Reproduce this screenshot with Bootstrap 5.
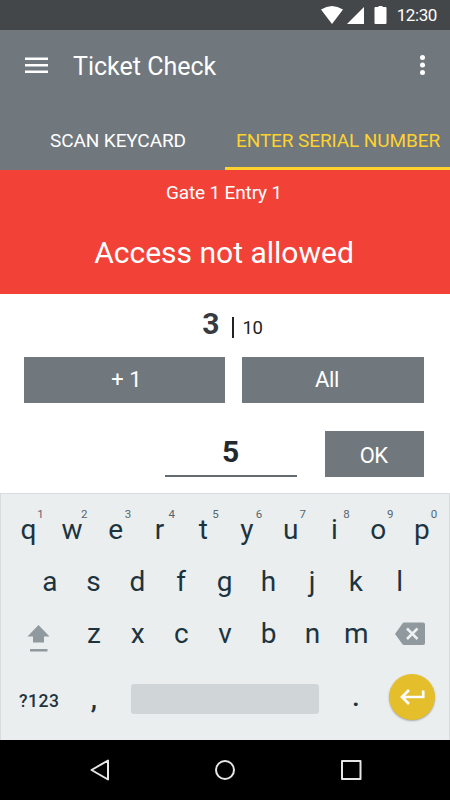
<!DOCTYPE html>
<html lang="en">
<head>
<meta charset="utf-8">
<meta name="viewport" content="width=device-width, initial-scale=1">
<title>Ticket Check</title>
<link href="https://cdn.jsdelivr.net/npm/bootstrap@5.3.0/dist/css/bootstrap.min.css" rel="stylesheet">
<style>
body{font-family:Roboto,"Liberation Sans",sans-serif;width:450px;height:800px;overflow:hidden;background:#fff}
svg{display:block;flex:none}
.status{height:30px;background:#444749;padding-right:13px;color:#fff;font-size:17px;letter-spacing:-.4px;line-height:31px}
.appbar{background:#70777d;color:#fff;height:140px}
.toolbar{height:72px;padding:0 23px 0 24px}
.title{font-size:25px;letter-spacing:0;line-height:73px;margin-left:25px}
.tabs{height:68px}
.tabs .nav-link{width:50%;color:#fff;font-size:19px;letter-spacing:-.1px;height:68px;padding:12px 0 0 50px;line-height:54px;border-bottom:3px solid transparent;border-radius:0;white-space:nowrap;text-align:left}
.tabs .nav-link.active{color:#fdd22f;border-color:#fdd22f;padding-left:11px}
.alertbox{background:#f24237;color:#fff;height:124px}
.gate{font-size:19px;letter-spacing:-.15px;line-height:46px;padding-right:2px}
.denied{font-size:30px;line-height:74px;padding-right:2px}
.count{height:63px;padding-left:15px;color:#222}
.num{font-size:30px;font-weight:700;line-height:60px;color:#373b3f}
.sep{width:2px;height:21px;background:#222;margin:3px 9px 0 12px}
.total{font-size:18.500px;letter-spacing:-.3px;line-height:68px}
.actions{padding-right:26px}
.flatbtn{background:#70777d;color:#fff;border:0;border-radius:0;height:46px;padding:0;font-size:22px;line-height:46px}
.b1{width:201px;padding-left:4px}.b2{width:182px;padding-right:12px;letter-spacing:-.3px}.b3{width:99px;padding-right:2px;padding-top:2px;letter-spacing:-.6px}
.entry{width:132px;height:46px;border-bottom:2px solid #636b71;line-height:41px;color:#23292d;padding-right:1px}
.keys{height:247px;margin-top:16px;background:#eaeeef;border:1px solid #d9dcdd;border-bottom:0;padding-top:10px;color:#1d343f}
.krow{height:52px;font-size:28px;line-height:52px}
.key{width:43.72px;text-align:center;flex:none;position:relative}
.hint{position:absolute;left:28px;top:-1px;width:12px;font-size:11.5px;line-height:22px;color:#56666e}
.r1{padding-left:5.5px}.r2{padding-left:27px}.r3{padding-left:26px}
.r3 .key:nth-child(2){margin-left:21px}
.shift{margin-top:10px}
.erase{margin-left:17px}
.r4{height:77px;padding:0 14px 0 18px}
.mode{font-size:17.5px;font-weight:500;letter-spacing:.5px;width:54px;line-height:30px;padding-top:4px}
.comma,.dot{font-size:28px;font-weight:500;line-height:30px;width:42px;text-align:center}
.dot{padding-top:0;margin-top:-3px}
.space{width:188px;height:30px;background:#d0d5d7;border-radius:3px}
.enter{width:46px;height:46px;border-radius:50%;background:#e4be2b;box-shadow:0 1px 2px rgba(0,0,0,.3);margin-bottom:3px}
.sysnav{height:60px;background:#000}
</style>
</head>
<body>
<div class="status d-flex justify-content-end">
  <svg width="76" height="30" viewBox="0 0 76 30" fill="#fff"><path d="M0 9.500Q11 2.500 22 9.500L11 24Z"/><path d="M26 24L43 7V24Z"/><path d="M53.500 8Q53.500 7 54.500 7H57.500V6H61.500V7H64.500Q65.500 7 65.500 8V23Q65.500 24 64.500 24H54.500Q53.500 24 53.500 23Z"/></svg>
  <span>12:30</span>
</div>
<header class="appbar">
  <div class="toolbar d-flex align-items-center">
    <svg width="24" height="18" viewBox="0 0 24 18" fill="#fff"><path d="M1 .5h23V3H1zM1 7h23v2.500H1zM1 13.500h23V16H1z"/></svg>
    <div class="title">Ticket Check</div>
    <svg class="ms-auto" width="9" height="22" viewBox="0 0 9 22" fill="#fff"><circle cx="4.500" cy="2.500" r="2.500"/><circle cx="4.500" cy="10" r="2.500"/><circle cx="4.500" cy="17.500" r="2.500"/></svg>
  </div>
  <nav class="tabs nav flex-nowrap">
    <a class="nav-link" href="#">SCAN KEYCARD</a>
    <a class="nav-link active" href="#">ENTER SERIAL NUMBER</a>
  </nav>
</header>
<section class="alertbox text-center">
  <div class="gate">Gate 1 Entry 1</div>
  <div class="denied">Access not allowed</div>
</section>
<main>
  <div class="count d-flex justify-content-center">
    <span class="num">3</span><span class="sep align-self-center"></span><span class="total">10</span>
  </div>
  <div class="actions d-flex justify-content-between ps-4">
    <button class="btn flatbtn b1">+ 1</button>
    <button class="btn flatbtn b2">All</button>
  </div>
  <div class="actions d-flex justify-content-end mt-4 pt-1">
    <div class="entry num text-center me-4">5</div>
    <button class="btn flatbtn b3 ms-1">OK</button>
  </div>
</main>
<section class="keys">
  <div class="krow r1 d-flex">
    <div class="key">q<span class="hint">1</span></div><div class="key">w<span class="hint">2</span></div><div class="key">e<span class="hint">3</span></div><div class="key">r<span class="hint">4</span></div><div class="key">t<span class="hint">5</span></div><div class="key">y<span class="hint">6</span></div><div class="key">u<span class="hint">7</span></div><div class="key">i<span class="hint">8</span></div><div class="key">o<span class="hint">9</span></div><div class="key">p<span class="hint">0</span></div>
  </div>
  <div class="krow r2 d-flex">
    <div class="key">a</div><div class="key">s</div><div class="key">d</div><div class="key">f</div><div class="key">g</div><div class="key">h</div><div class="key">j</div><div class="key">k</div><div class="key">l</div>
  </div>
  <div class="krow r3 d-flex align-items-center">
    <svg class="shift" width="24" height="28" viewBox="0 0 24 28" fill="#8f999e"><path d="M11.500 0L22.500 11.500H17V17.500H6V11.500H.5Z"/><path d="M3 24H20.500V26.500H3Z"/></svg>
    <div class="key">z</div><div class="key">x</div><div class="key">c</div><div class="key">v</div><div class="key">b</div><div class="key">n</div><div class="key">m</div>
    <svg class="erase" width="31" height="24" viewBox="0 0 31 24"><path d="M9 .5H28Q30 .5 30 2.500V21Q30 23 28 23H9Q8 23 7.500 22.300L0 12L7.500 1.500Q8 .5 9 .5Z" fill="#8f999e"/><path d="M12 6.500l10.500 10.500m0-10.500l-10.500 10.500" stroke="#eef1f2" stroke-width="2.500"/></svg>
  </div>
  <div class="r4 d-flex align-items-center">
    <div class="mode">?123</div>
    <div class="comma">,</div>
    <div class="space ms-3"></div>
    <div class="dot ms-3">.</div>
    <div class="enter ms-auto d-flex justify-content-center align-items-center">
      <svg width="26" height="18" viewBox="0 0 26 18" fill="none" stroke="#fff" stroke-width="2.700"><path d="M24.200 2.500V9H3M10 2L3 9L10 16"/></svg>
    </div>
  </div>
</section>
<footer class="sysnav">
  <svg width="450" height="60" viewBox="0 0 450 60" fill="none" stroke="#e6e6e6" stroke-width="2" stroke-linejoin="round"><path d="M108 20.500V39.500L91.500 30Z"/><circle cx="225" cy="30" r="9"/><rect x="342" y="21" width="18.500" height="18"/></svg>
</footer>
<script src="https://cdn.jsdelivr.net/npm/bootstrap@5.3.0/dist/js/bootstrap.bundle.min.js"></script>
</body>
</html>
